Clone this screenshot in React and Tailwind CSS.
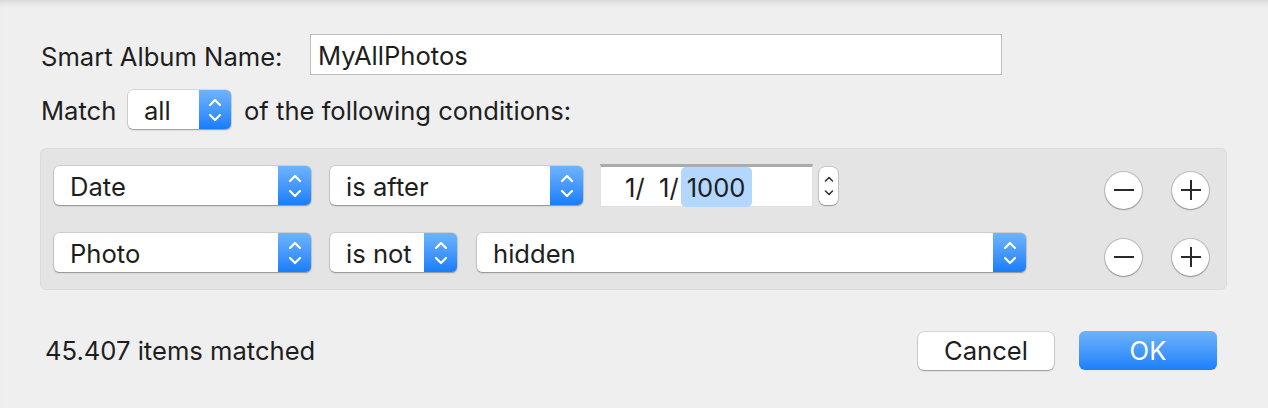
import React from "react";

const font = { fontFamily: "Inter, 'Liberation Sans', sans-serif" };

function Chevrons({ color = "white", small = false }) {
  if (small) {
    return (
      <svg width="12" height="28" viewBox="0 0 12 28" fill="none">
        <path d="M2.5 9 L6 5.5 L9.5 9" stroke={color} strokeWidth="1.6" strokeLinecap="round" strokeLinejoin="round" />
        <path d="M2.5 19 L6 22.5 L9.5 19" stroke={color} strokeWidth="1.6" strokeLinecap="round" strokeLinejoin="round" />
      </svg>
    );
  }
  return (
    <svg width="16" height="30" viewBox="0 0 16 30" fill="none">
      <path d="M3 10 L8 5 L13 10" stroke={color} strokeWidth="2.2" strokeLinecap="round" strokeLinejoin="round" />
      <path d="M3 20 L8 25 L13 20" stroke={color} strokeWidth="2.2" strokeLinecap="round" strokeLinejoin="round" />
    </svg>
  );
}

function Popup({ label, className }) {
  return (
    <div
      className={
        "flex h-[39px] shrink-0 items-stretch rounded-[5px] bg-white shadow-[0_0_0_0.5px_rgba(0,0,0,0.18),0_1px_1.5px_rgba(0,0,0,0.3)] " +
        className
      }
    >
      <div className="flex flex-1 items-center pl-[16px] pt-[3px] text-[25.6px] text-[#1e1e1e]">{label}</div>
      <div className="flex w-[33px] items-center justify-center rounded-r-[5px] bg-gradient-to-b from-[#6db4fb] to-[#167dfb]">
        <Chevrons />
      </div>
    </div>
  );
}

function RoundButton({ plus }) {
  return (
    <div className="flex h-[37px] w-[37px] items-center justify-center rounded-full bg-white shadow-[0_0_0_1px_rgba(0,0,0,0.16),0_1px_1.5px_rgba(0,0,0,0.25)]">
      <svg width="22" height="22" viewBox="0 0 22 22">
        <path d="M1 11 H21" stroke="#2a2a2a" strokeWidth="2" />
        {plus && <path d="M11 1 V21" stroke="#2a2a2a" strokeWidth="2" />}
      </svg>
    </div>
  );
}

function RowButtons() {
  return (
    <div className="ml-auto mt-[9px] flex gap-[30px]">
      <RoundButton />
      <RoundButton plus />
    </div>
  );
}

export default function App() {
  return (
    <div
      className="relative h-[408px] w-[1268px] overflow-hidden bg-[#efefef] text-[#1e1e1e] shadow-[inset_0_7px_6px_-5px_rgba(0,0,0,0.12)]"
      style={font}
    >
      <div className="pl-[41px] pt-[34px]">
        {/* name */}
        <div className="flex h-[41px] items-center">
          <div className="w-[269px] pt-[5px] text-[25.6px]">Smart Album Name:</div>
          <div className="flex h-[41px] w-[692px] items-center border border-[#bdbdbd] bg-white pl-[7px] pt-[4px] text-[25.6px]">
            MyAllPhotos
          </div>
        </div>

        {/* match */}
        <div className="mt-[15px] flex h-[39px] items-center">
          <div className="w-[87px] pt-[3px] text-[25.6px]">Match</div>
          <div className="flex h-[39px] w-[103px] items-stretch rounded-[5px] bg-white shadow-[0_0_0_0.5px_rgba(0,0,0,0.18),0_1px_1.5px_rgba(0,0,0,0.3)]">
            <div className="flex flex-1 items-center pl-[16px] pt-[3px] text-[25.6px]">all</div>
            <div className="flex w-[32px] items-center justify-center rounded-r-[5px] bg-gradient-to-b from-[#6db4fb] to-[#167dfb]">
              <Chevrons />
            </div>
          </div>
          <div className="ml-[13px] pt-[3px] text-[25.6px]">of the following conditions:</div>
        </div>

        {/* conditions */}
        <div className="-ml-[1px] mt-[19px] h-[142px] w-[1187px] rounded-[6px] border border-[#dcdcdc] bg-[#e4e4e4] pl-[13px] pr-[17px] pt-[17px]">
          <div className="flex h-[39px] items-center">
            <Popup label="Date" className="w-[257px]" />
            <Popup label="is after" className="ml-[19px] w-[253px]" />
            <div className="ml-[17px] flex h-[43px] w-[213px] items-center border-t-[3px] border-r border-b border-l border-t-[#ababab] border-r-[#e0e0e0] border-b-[#e0e0e0] border-l-[#e0e0e0] bg-white pl-[24px] pt-[1px] text-[25.6px]">
              <span className="pt-[2px]">1/&nbsp;&nbsp;1/</span>
              <span className="ml-[2px] rounded-[5px] bg-[#b3d7ff] px-[6px] pb-[0px] pt-[2px]">1000</span>
            </div>
            <div className="ml-[6px] flex h-[38px] w-[19px] items-center justify-center rounded-[6px] bg-white shadow-[0_0_0_0.5px_rgba(0,0,0,0.25),0_1px_1px_rgba(0,0,0,0.25)]">
              <Chevrons color="#333" small />
            </div>
            <RowButtons />
          </div>
          <div className="mt-[28px] flex h-[39px] items-center">
            <Popup label="Photo" className="w-[257px]" />
            <Popup label="is not" className="ml-[19px] w-[127px]" />
            <Popup label="hidden" className="ml-[20px] w-[549px]" />
            <RowButtons />
          </div>
        </div>

        {/* footer */}
        <div className="mt-[41px] flex h-[39px] items-center pr-[51px]">
          <div className="ml-[4px] pt-[2px] text-[25.6px]">45.407 items matched</div>
          <div className="ml-auto flex h-[38px] w-[136px] items-center justify-center rounded-[6px] bg-white pt-[2px] text-[25.6px] shadow-[0_0_0_0.5px_rgba(0,0,0,0.2),0_1px_1.5px_rgba(0,0,0,0.3)]">
            Cancel
          </div>
          <div className="ml-[25px] flex h-[39px] w-[138px] items-center justify-center rounded-[6px] bg-gradient-to-b from-[#6cb3fa] to-[#197ffb] pt-[2px] text-[25.6px] text-white">
            OK
          </div>
        </div>
      </div>
    </div>
  );
}
